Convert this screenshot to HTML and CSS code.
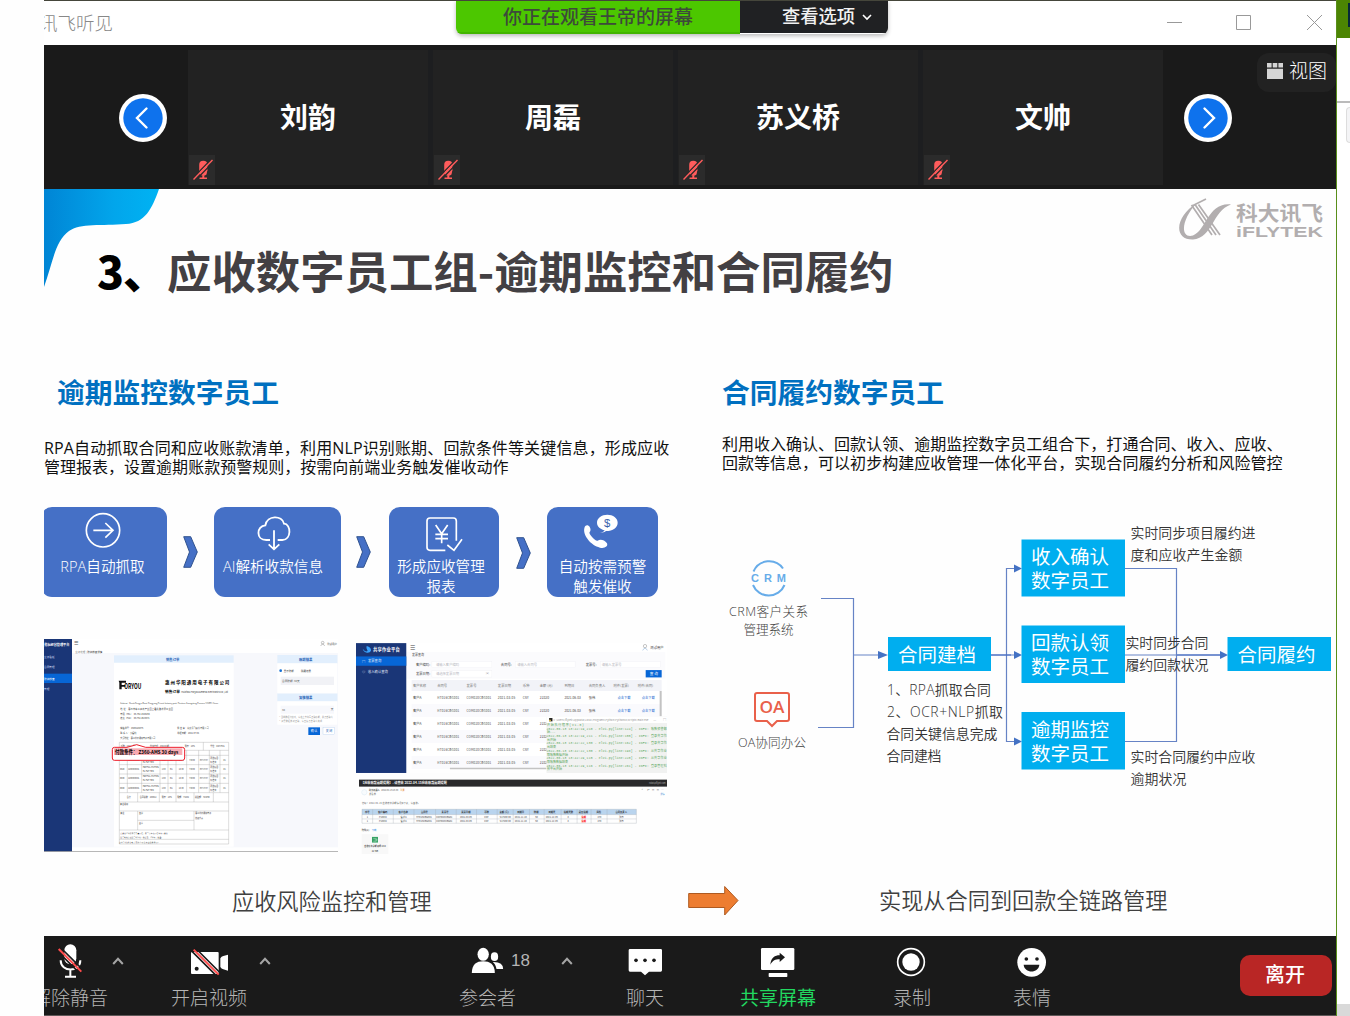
FILE: index.html
```html
<!DOCTYPE html>
<html lang="zh-CN">
<head>
<meta charset="utf-8">
<title>讯飞听见</title>
<link rel="stylesheet" href="styles.css">
</head>
<body>
<svg width="0" height="0" class="defs">
  <symbol id="muted" viewBox="0 0 26 30">
    <rect x="10.2" y="5.800" width="8.200" height="12.500" rx="4" fill="#ff5c5c"/>
    <path d="M10.200 15h8.200l-.9 4.500q-3.200 2.500-6.400 0zM13.300 19h2v3.500h2.700v1.600h-7.500v-1.600h2.800z" fill="#ff5c5c"/>
    <path d="M5.800 26L24.800 6.500M3.500 23.500L22.500 4" stroke="#2b2b2b" stroke-width="1.200"/>
    <path d="M4.500 24.500L23.500 5" stroke="#ff5c5c" stroke-width="1.400"/>
  </symbol>
  <symbol id="chevron" viewBox="0 0 15 32">
    <path d="M.7.7h7L14.300 16 7.700 31.300h-7L6.500 16z" fill="#4570c6" stroke="#31538f" stroke-width="1"/>
  </symbol>
  <symbol id="caret" viewBox="0 0 20 12">
    <path d="M5.200 9L10 3.800 14.800 9" fill="none" stroke="#a5a5a5" stroke-width="2"/>
  </symbol>
</svg>
<div class="desktop">
  <main class="window">
    <header class="titlebar">
      <span class="app-name">讯飞听见</span>
      <svg class="controls" width="162" height="20" viewBox="0 0 162 20" fill="none" stroke="#999">
        <path d="M3 10.500h15M72.500 3.500h14v14h-14zM143 3l15 15M158 3l-15 15"/>
      </svg>
      <div class="banner">
        <div class="watching">你正在观看王帝的屏幕</div>
        <div class="options">查看选项<svg width="12" height="8" viewBox="0 0 12 8"><path d="M2 2l4 4 4-4" fill="none" stroke="#fff" stroke-width="1.600"/></svg></div>
      </div>
    </header>

    <section class="gallery">
      <svg class="nav prev" width="48" height="48" viewBox="0 0 48 48"><circle cx="24" cy="24" r="24" fill="#fff"/><circle cx="24" cy="24" r="19.700" fill="#0e72ed"/><path d="M27.500 14.500L18 24l9.500 9.500" fill="none" stroke="#fff" stroke-width="2.400" stroke-linecap="round"/></svg>
      <div class="tiles">
        <div class="tile"><span>刘韵</span><svg class="mute"><use href="#muted"/></svg></div>
        <div class="tile"><span>周磊</span><svg class="mute"><use href="#muted"/></svg></div>
        <div class="tile"><span>苏义桥</span><svg class="mute"><use href="#muted"/></svg></div>
        <div class="tile"><span>文帅</span><svg class="mute"><use href="#muted"/></svg></div>
      </div>
      <svg class="nav next" width="48" height="48" viewBox="0 0 48 48"><circle cx="24" cy="24" r="24" fill="#fff"/><circle cx="24" cy="24" r="19.700" fill="#0e72ed"/><path d="M20.500 14.500L30 24l-9.500 9.500" fill="none" stroke="#fff" stroke-width="2.400" stroke-linecap="round"/></svg>
      <div class="view"><svg width="16" height="16" viewBox="0 0 16 16" fill="#d5d5d5"><path d="M0 0h4.600v4.600H0zM5.700 0h4.600v4.600H5.700zM11.400 0H16v4.600h-4.600zM0 5.800h16V16H0z"/></svg><span>视图</span></div>
    </section>

    <section class="slide">
      <svg class="corner" width="116" height="99" viewBox="0 0 116 99">
        <defs><linearGradient id="sky"><stop offset="0" stop-color="#0085d5"/><stop offset=".6" stop-color="#02a5eb"/><stop offset="1" stop-color="#00b3f3"/></linearGradient></defs>
        <path d="M0 0h115C108 20 101 34 82 35 58 37 36 34 25 42 11 52 9 73 0 98z" fill="url(#sky)"/>
      </svg>
      <svg class="logo" width="146" height="44" viewBox="1179 198 146 44" fill="#b2aeaf">
        <path d="M1197 203C1175 216 1173 240 1193 239.500 1213 238 1212 211 1231 204.500 1208 202 1206 231 1193 235.500 1179 239 1182 218 1197 203z"/>
        <path d="M1191.500 205l20.500 30M1195 204.500l21 30.500M1198.500 204.500l21.500 30.500M1192 206l14-7" fill="none" stroke="#b2aeaf" stroke-width="1.700"/>
        <text x="1236" y="221" font-size="20.500" font-weight="700" textLength="87" lengthAdjust="spacingAndGlyphs">科大讯飞</text>
        <text x="1236" y="236.500" font-size="15" class="latin" textLength="87" lengthAdjust="spacingAndGlyphs">iFLYTEK</text>
      </svg>
      <h1><b>3、</b>应收数字员工组-逾期监控和合同履约</h1>
      <div class="columns">
        <div class="overdue">
          <h2>逾期监控数字员工</h2>
          <p><span class="first">RPA自动抓取合同和应收账款清单，利用NLP识别账期、回款条件等关键信息，形成应收</span><br>管理报表，设置逾期账款预警规则，按需向前端业务触发催收动作</p>
          <div class="steps">
            <div class="step s1"><svg width="50" height="50" viewBox="144 441 150 150" fill="none" stroke="#fff" stroke-width="5"><circle cx="219" cy="511" r="50"/><path d="M190 511h58M226 489l23 22-23 22"/></svg>RPA自动抓取</div>
            <svg class="chev c1"><use href="#chevron"/></svg>
            <div class="step s2"><svg width="50" height="50" viewBox="654 441 150 150" fill="none" stroke="#fff" stroke-width="5.500"><path d="M720 540h-11c-32 0-30-42-3-44 5-31 51-31 56-5 22 1 23 49-5 49h-14M732 511v56M716 553l16 15 16-15"/></svg>AI解析收款信息</div>
            <svg class="chev c2"><use href="#chevron"/></svg>
            <div class="step s3"><svg width="50" height="50" viewBox="168 441 150 150" fill="none" stroke="#fff" stroke-width="5"><path d="M256 571h-46q-9 0-9-9v-79q0-9 9-9h70q9 0 9 9v59M262 555l20 16 24-33M227 495l18 26 18-26M245 520v30M226 523h38M226 536h38"/></svg>形成应收管理<br>报表</div>
            <svg class="chev c3"><use href="#chevron"/></svg>
            <div class="step s4"><svg width="50" height="50" viewBox="654 441 150 150"><path d="M683 496c7 2 12 15 6 20-5 4 17 29 24 26 7-5 20-3 28 8 4 10-8 16-21 13-27-6-52-37-47-58 1-6 5-10 10-9z" fill="#fff"/><path d="M720 518c9-1 12-4 14-7-12-3-23-11-23-23 0-14 14-24 31-24s31 10 31 24-14 25-35 25c-4 3-9 5-18 5z" fill="#fff"/><text x="732" y="500" class="dollar">$</text></svg>自动按需预警<br>触发催收</div>
          </div>
          <div class="shots">
            <svg class="shot-order" width="294" height="213" viewBox="12 27 882 639">
              <rect x="12" y="27" width="882" height="639" fill="#fff"/>
              <rect x="96" y="52" width="798" height="600" fill="#f7f8fc"/>
              <rect x="96" y="27" width="798" height="42" fill="#fff"/>
              <rect x="12" y="27" width="84" height="639" fill="#1a3677"/><rect x="12" y="131" width="84" height="28" fill="#0766d6"/>
              <g fill="#c3d2f0" font-size="9"><text x="13" y="49" font-weight="bold" font-size="9.500" fill="#fff" textLength="75">指标经营管理平台</text><text x="12" y="83" font-size="8">业务看板</text><text x="12" y="115" font-size="8">合同管理</text><text x="12" y="149" font-size="8" fill="#fff">账款核查</text><text x="12" y="181" font-size="8">管理</text></g>
              <g fill="#555" font-size="7.500"><text x="102" y="46" font-size="14">☰</text><text x="106" y="68" fill="#777">业务处理 | <tspan fill="#333">账款核查详情</tspan></text><text x="861" y="44">测试用户</text></g>
              <circle cx="848" cy="38" r="4" fill="none" stroke="#555"/><path d="M842 48q6-12 12 0" fill="none" stroke="#555"/>
              <rect x="222" y="98" width="359" height="552" fill="#fff"/>
              <g fill="#e2effd"><rect x="222" y="76" width="359" height="22"/><rect x="712" y="75" width="180" height="25"/><rect x="712" y="190" width="180" height="24"/></g>
              <g fill="#2261b5" font-size="10" font-weight="bold"><text x="378" y="92">销售订单</text><text x="777" y="92">账期结果</text><text x="777" y="206">复核结果</text></g>
              <rect x="712" y="100" width="180" height="90" fill="#fff"/><rect x="712" y="214" width="180" height="70" fill="#fff"/>
              <circle cx="722" cy="122" r="4" fill="#1670d5"/>
              <g font-size="7.500" fill="#444"><text x="731" y="125">显示账期</text><text x="783" y="125">隐藏结果</text></g>
              <rect x="722" y="140" width="160" height="25" fill="#f1f2f6"/><rect x="722" y="227" width="160" height="24" fill="#f7f8fc"/>
              <g font-size="8" fill="#555"><text x="726" y="155">合同账期: 30天</text><text x="726" y="242">30</text><text x="872" y="241">天</text></g>
              <g font-size="6" fill="#888"><text x="718" y="265" textLength="160">* 当前数据待修改，请在上方填写正确账期，并点击确认</text><text x="718" y="277" textLength="128">* 如果数据核对正确，请直接点击确认完成</text></g>
              <rect x="805" y="292" width="35" height="23" fill="#0766d6"/><rect x="849" y="292" width="35" height="22" fill="#fff" stroke="#a8c7ee"/>
              <g font-size="9"><text x="812" y="307" fill="#fff">确 认</text><text x="857" y="307" fill="#2261b5">关 闭</text></g>
              <path d="M236 152h22v6h-13v7h11v5h-11v8h-7v-20z" fill="#111"/>
              <text x="253" y="177" font-size="22" font-weight="bold" textLength="51" lengthAdjust="spacingAndGlyphs">ORYOU</text>
              <text x="375" y="161" font-size="13.500" font-weight="bold" textLength="193">惠州华阳通用电子有限公司</text>
              <text x="375" y="190" font-size="11" font-weight="bold" textLength="45">销售订单</text><text x="424" y="189" font-size="7" fill="#333" textLength="140">Huizhou Foryou General Electronics Co.,Ltd</text>
              <g font-size="6.500" fill="#333"><text x="241" y="223" font-size="5.500" textLength="293">Address：North Dongjia Road, Dongjiang Hi-tech Industry park, Huizhou, Guangdong Province 516005, China</text><text x="241" y="239" textLength="158">地 址：惠州市东江高新产业园上霞北路华阳工业园</text><text x="241" y="254">电话（TEL）: 86-752-2619298</text><text x="241" y="268">传真（FAX）: 86-752-2619871</text><text x="241" y="298">销售单号：4500128075</text><text x="241" y="313">联 系 人：小福利</text><text x="241" y="327" font-size="6" textLength="105">交货地址：惠州华阳通用电子有限公司</text><text x="412" y="298" font-size="6" textLength="94">供 应 商：科大讯飞股份有限公司</text><text x="412" y="313">单据日期：2021.07.04</text></g>
              <g fill="none" stroke="#999" stroke-width="1"><path d="M238 337h328v305H238zM238 361h328M238 376h328M238 404h328M238 432h328M238 460h328M238 488h328M238 516h328M238 543h328M238 600h328M238 628h328M293 543v57M462 543v57M293 571h169M490 337v24M262 361v127M305 361v127M360 361v127M384 361v127M408 361v127M440 361v127M476 361v127M508 361v127M540 361v127M293 488v28M358 488v28M408 488v28M462 488v28M520 488v28"/></g>
              <g font-size="6" fill="#333"><text x="242" y="351">币种：CNY 人民币</text><text x="330" y="351">付款方式：Z360 账期</text><text x="434" y="351">税率：13%</text><text x="511" y="351">单位：CNY/PCS</text>
                <text x="240" y="420">0020</text><text x="240" y="448">0030</text><text x="240" y="476">0040</text>
                <g id="order-row"><text x="264" y="420">1200000045</text><text x="308" y="414">HWYFUL-PLMTRS</text><text x="308" y="426">HL-FGF-TRK</text><text x="365" y="420">1.00</text><text x="390" y="420">EA</text><text x="416" y="420">13.00</text><text x="448" y="420">73880</text><text x="479" y="420" font-size="5">2021.03.07</text><text x="511" y="414">研发项目</text><text x="511" y="426">标准款</text><text x="550" y="420">45</text></g>
                <use href="#order-row" y="28"/><use href="#order-row" y="56"/><use href="#order-row" y="-28"/>
                <text x="260" y="504">合计</text><text x="299" y="504">合同总数：100012</text><text x="365" y="504">税率：13%</text><text x="412" y="504">税额：75482</text><text x="465" y="504">总金额：726098</text>
                <text x="240" y="526">备注说明</text><text x="241" y="553">备注</text><text x="297" y="553">签字</text><text x="297" y="582">盖章</text><text x="466" y="553">惠州华阳通用电子</text><text x="466" y="567">授权代表</text>
                <text x="241" y="611" font-size="5" textLength="142">请确认订单后签字盖章回传，若三日内未回传视为已确认</text><text x="241" y="624" font-size="5" textLength="128">送货地址请在送货单注明：供应商，订单号，数量。</text><text x="237" y="639" font-size="5" textLength="122">惠州华阳通用电子有限公司保留最终解释权。</text></g>
              <path d="M223 352h38l29-8 27 8h110q7 0 7 7v25q0 7-7 7H223q-6 0-6-7v-25q0-7 6-7z" fill="#fff" stroke="#ed1c29" stroke-width="3"/>
              <rect x="222" y="355" width="205" height="20" fill="#f8abb2"/><text x="225" y="371" font-size="16" font-weight="bold" textLength="190" lengthAdjust="spacingAndGlyphs">付款条件： Z360-AMS 30 days</text>
              <path d="M12 665h882" stroke="#aaa" stroke-width="3"/>
            </svg>
            <svg class="shot-platform" width="311" height="212" viewBox="18 39 934 636">
              <rect x="18" y="39" width="934" height="390" fill="#fff"/><rect x="169" y="66" width="778" height="80" fill="#fbfbfd"/>
              <rect x="18" y="39" width="151" height="390" fill="#1a3677"/><rect x="18" y="79" width="151" height="28" fill="#0766d6"/>
              <path d="M38 56q8 11 15 7-6-9-3-15 14 3 13 14-3 7-12 6-10-2-13-12z" fill="#39a4ff"/>
              <text x="69" y="63" font-size="13" font-weight="bold" fill="#fff" textLength="81">共享作业平台</text>
              <g fill="#e4ecfb" font-size="10"><text x="36" y="98">▤</text><text x="54" y="97">发票查询</text><text x="36" y="130">◎</text><text x="54" y="130">收入确认查询</text></g>
              <g font-size="10" fill="#444"><text x="179" y="59" font-size="17">☰</text><text x="186" y="78" font-size="9">发票查询</text><text x="902" y="56">测试用户</text><text x="198" y="107">客户编码:</text><text x="198" y="135">发票日期:</text><text x="453" y="107">合同号:</text><text x="708" y="107">发票号:</text></g>
              <circle cx="886" cy="48" r="5" fill="none" stroke="#555"/><path d="M879 61q7-14 14 0" stroke="#3776bd" fill="none"/>
              <g fill="#fff" stroke="#ededf3"><rect x="246" y="94" width="180" height="19"/><rect x="246" y="122" width="180" height="19"/><rect x="496" y="94" width="180" height="19"/><rect x="752" y="94" width="180" height="19"/></g>
              <g font-size="10" fill="#b7b7c0"><text x="258" y="107">请输入客户编码</text><text x="258" y="135">请选择发票日期</text><text x="408" y="136">▣</text><text x="502" y="107">请输入合同号</text><text x="756" y="107">请输入发票号</text></g>
              <rect x="888" y="120" width="48" height="22" fill="#0766d6"/><text x="900" y="135" fill="#fff" font-size="11">查 询</text>
              <rect x="185" y="150" width="751" height="33" fill="#f2f3f8"/>
              <g font-size="10" fill="#777"><text x="189" y="170">客户名称</text><text x="262" y="170">合同号</text><text x="350" y="170">发票号</text><text x="444" y="170">发票日期</text><text x="519" y="170">币种</text><text x="570" y="170">金额 (元)</text><text x="644" y="170">到期日</text><text x="717" y="170">合同负责人</text><text x="791" y="170">附件(发票)</text><text x="864" y="170">附件(合同)</text></g>
              <path d="M185 222h751v39H185zM185 300h405v39H185zM185 378h405v39H185z" fill="#fafafd"/>
              <g id="bill" font-size="10" fill="#444"><text x="189" y="206">客户A</text><text x="262" y="206" font-size="9" textLength="66">HT016CBG001</text><text x="350" y="206" font-size="9" textLength="74">COM020CBG001</text><text x="444" y="206" font-size="9.500" textLength="52">2021-03-05</text><text x="519" y="206" font-size="9">CNY</text><text x="570" y="206">22320</text></g>
              <use href="#bill" y="39"/><use href="#bill" y="78"/><use href="#bill" y="118"/><use href="#bill" y="157"/><use href="#bill" y="196"/>
              <g id="bill-end" font-size="10"><text x="644" y="206" font-size="9.500" fill="#444">2021-06-03</text><text x="717" y="206" fill="#444">张伟</text><text x="803" y="206" fill="#1768d0">点击下载</text><text x="876" y="206" fill="#1768d0">点击下载</text></g><use href="#bill-end" y="39"/>
              <path d="M930 183h6v78h-6zM300 413h290v5H300z" fill="#c3c3c3"/>
              <rect x="590" y="259" width="362" height="170" fill="#f1f2f1"/><rect x="590" y="259" width="362" height="20" fill="#fff"/><path d="M598 264h10v10h-10z" fill="#222"/><path d="M598 274v-5h5v5z" fill="#efc943"/>
              <text x="611" y="272" font-size="7" fill="#888" textLength="285">C:\Users\iflytek\AppData\Local\Programs\Python\Python38\scripts\main.exe</text><text x="911" y="273" font-size="10" fill="#999" textLength="39">— □</text>
              <g class="console" font-size="9"><text x="592" y="288" textLength="110">开始执行程序(v1.0)</text><text x="590" y="300" textLength="361">2022-06-13 13:42:19,210 - elvi.py[line:124] - INFO: 账款预警邮</text><text x="592" y="310">始...</text><text x="590" y="321" textLength="361">2022-06-13 13:42:19,211 - elvi.py[line:155] - INFO: 登录共享作</text><text x="592" y="332">台开始</text><text x="590" y="343" textLength="361">2022-06-13 13:42:22,130 - elvi.py[line:162] - INFO: 登录共享作</text><text x="592" y="354">台结束</text><text x="590" y="366" textLength="361">2022-06-13 13:42:22,130 - elvi.py[line:198] - INFO: 从共享作业</text><text x="592" y="377">取账款数据开始</text><text x="590" y="388" textLength="361">2022-06-13 13:42:29,115 - elvi.py[line:220] - INFO: 从共享作业</text><text x="592" y="399">取账款数据结束</text><text x="590" y="411" textLength="361">2022-06-13 13:42:29,116 - elvi.py[line:261] - INFO: 登录管理科</text><text x="592" y="421">技平台开始</text></g>
              <rect x="27" y="449" width="925" height="21" fill="#29292b"/><text x="33" y="461" font-size="9.500" font-weight="bold" fill="#fff" textLength="258">【应收账款逾期提醒】- 请查收 2022-04-15应收账款逾期提醒</text><text x="898" y="461" font-size="6" fill="#aaa" textLength="50">robot@iflytek.com</text>
              <circle cx="43" cy="487" r="8" fill="#f8fbfd" stroke="#cce2ef"/><g font-size="6.500" fill="#555"><text x="57" y="483" font-weight="bold">财务机器人</text><text x="94" y="483">2022-04-15 16:30</text><text x="151" y="483" fill="#e68c35">重要</text><text x="57" y="495">发给  我</text><text x="875" y="484" font-size="8" textLength="68">⌃ ↶ ⊙ ⊙ ⋯</text><text x="932" y="495" fill="#398bd4">详情</text><text x="36" y="521" textLength="174">您好！2022-04-15 应收账款逾期情况如下表，请查收。</text></g>
              <rect x="36" y="538" width="824" height="16" fill="#b9d4ee"/><path d="M36 538h824M36 554h824M36 567h824M36 580h824M36 538v42M68 538v42M130 538v42M192 538v42M257 538v42M319 538v42M380 538v42M442 538v42M490 538v42M539 538v42M583 538v42M634 538v42M682 538v42M724 538v42M772 538v42M860 538v42" fill="none" stroke="#a5abb2"/>
              <g font-size="7" font-weight="bold" fill="#333"><text x="45" y="549">序号</text><text x="84" y="549">客户编码</text><text x="146" y="549">客户名称</text><text x="213" y="549">合同号</text><text x="275" y="549">发票号</text><text x="334" y="549">发票日期</text><text x="403" y="549">币种</text><text x="449" y="549">金额 (元)</text><text x="502" y="549">到期日</text><text x="552" y="549">账期</text><text x="596" y="549">到期天</text><text x="642" y="549">逾期天数</text><text x="687" y="549">是否逾期</text><text x="740" y="549">风险</text><text x="797" y="549">合同负责人</text></g>
              <g id="mail-row" font-size="7" fill="#444"><text x="50" y="563">1</text><text x="87" y="563">P10032</text><text x="152" y="563">客户A</text><text x="199" y="563">HT016CBG001</text><text x="259" y="563">COM020CBG01</text><text x="330" y="563">2021-08-05</text><text x="403" y="563">CNY</text><text x="450" y="563">917200.00</text><text x="495" y="563">2021-11-28</text><text x="556" y="563">60</text><text x="588" y="563">2021-12-05</text><text x="653" y="563">8</text><text x="695" y="563" fill="red" font-weight="bold">逾期</text><text x="743" y="563">270</text><text x="808" y="563">张伟</text></g><use href="#mail-row" y="13"/>
              <g font-size="7"><text x="35" y="604">附件(1)</text><text x="65" y="604" fill="#2285df">下载</text></g><rect x="35" y="613" width="80" height="59" fill="#f8f8f8"/><rect x="66" y="621" width="18" height="17" fill="#38a365"/><path d="M70 626h9v8h-9M74 630h9" stroke="#fff" fill="none"/><text x="43" y="651" font-size="6" textLength="64">应收账款逾期明细.xlsx</text><text x="65" y="665" font-size="6">12.7KB</text>
            </svg>
          </div>
        </div>
        <div class="contract">
          <h2>合同履约数字员工</h2>
          <p>利用收入确认、回款认领、逾期监控数字员工组合下，打通合同、收入、应收、<br>回款等信息，可以初步构建应收管理一体化平台，实现合同履约分析和风险管控</p>
          <svg class="flow" width="614" height="310" viewBox="722 500 614 310">
            <g fill="none" stroke="#6683c5" stroke-width="1.200"><path d="M821 598.500h32.500v129H818M853.500 655H880M991 655h24M1015 568.500h-8.500v173h8.500M1125 568.500h51.500v173H1125M1125 655h97"/></g>
            <path d="M991 655h20M1177 655h45" stroke="#3c65c0"/>
            <path d="M878 651l10 4-10 4zM1014 564.500l8 4-8 4zM1014 651l8 4-8 4zM1014 737.500l8 4-8 4zM1220 651l8 4-8 4z" fill="#4472c4"/>
            <g fill="#00aeef"><path d="M888 637h103v34H888zM1021.500 539.500H1125v57h-103.500zM1021.500 625.500H1125V683h-103.500zM1021.500 712H1125v57.500h-103.500zM1227.500 637H1331v34h-103.500z"/></g>
            <g class="node"><text x="898" y="662" textLength="78">合同建档</text><text x="1031" y="563.500" textLength="78">收入确认</text><text x="1031" y="587.500" textLength="78">数字员工</text><text x="1031" y="650" textLength="78">回款认领</text><text x="1031" y="674" textLength="78">数字员工</text><text x="1031" y="736.500" textLength="78">逾期监控</text><text x="1031" y="760.500" textLength="78">数字员工</text><text x="1237.500" y="662" textLength="78">合同履约</text></g>
            <g class="note"><text x="1130.500" y="537.500" textLength="125">实时同步项目履约进</text><text x="1130.500" y="559.500" textLength="112">度和应收产生金额</text><text x="1125.500" y="648" textLength="83">实时同步合同</text><text x="1125.500" y="670" textLength="83">履约回款状况</text><text x="1130.500" y="761.500" textLength="125">实时合同履约中应收</text><text x="1130.500" y="783.500" textLength="56">逾期状况</text>
            <text x="887" y="695" textLength="104">1、RPA抓取合同</text><text x="887" y="717" textLength="116">2、OCR+NLP抓取</text><text x="886.500" y="738.500" textLength="111">合同关键信息完成</text><text x="886.500" y="760.500" textLength="55">合同建档</text></g>
            <g class="source"><text x="729" y="615.500" textLength="79">CRM客户关系</text><text x="743.500" y="634" textLength="50">管理系统</text><text x="738" y="747" textLength="68">OA协同办公</text></g>
            <path d="M753.500 571.500a17 17 0 0 1 29.500-3M753 585a17 17 0 0 0 31.500 0" fill="none" stroke="#67ace9" stroke-width="2"/>
            <text x="751" y="582" class="latin" font-size="11" fill="#67ace9" textLength="35">CRM</text>
            <path d="M757 693h30q2 0 2 2v24q0 2-2 2h-10l-5 5-5-5h-10q-2 0-2-2v-24q0-2 2-2z" fill="none" stroke="#e9604a" stroke-width="2"/>
            <text x="759.500" y="712.500" class="oa" font-size="16.500" fill="#e9604a" textLength="25" lengthAdjust="spacingAndGlyphs">OA</text>
          </svg>
        </div>
      </div>
      <footer class="summary">
        <span class="risk">应收风险监控和管理</span>
        <svg width="51" height="32" viewBox="0 0 51 32"><path d="M.7 8.500h36V1.500L50 15.500 36.700 30v-7.500H.7z" fill="#ed7d31" stroke="#ae5a21"/></svg>
        <span class="chain">实现从合同到回款全链路管理</span>
      </footer>
    </section>

    <nav class="toolbar">
      <div class="tool t-audio"><svg viewBox="48 216 144 120"><rect x="103" y="226" width="36" height="60" rx="18" fill="#fff"/><path d="M92 274c0 37 59 37 59 0M121 302v20M105 323h33" fill="none" stroke="#fff" stroke-width="6"/><path d="M90 234l68 68M82 246l68 68" stroke="#1a1a1a" stroke-width="5"/><path d="M86 240l68 68" stroke="#ff4c4c" stroke-width="6"/></svg><span>解除静音</span></div>
      <svg class="caret"><use href="#caret"/></svg>
      <div class="tool t-video"><svg viewBox="465 216 144 120"><rect x="483" y="249" width="83" height="66" rx="3" fill="#fff"/><path d="M571 268q3-6 9-7l14-4v48l-14-4q-6-1-9-7z" fill="#fff"/><circle cx="500" cy="299" r="6" fill="#1a1a1a"/><path d="M496 237l75 75M486 247l75 75" stroke="#1a1a1a" stroke-width="5"/><path d="M491 242l75 75" stroke="#ff4c4c" stroke-width="6"/></svg><span>开启视频</span></div>
      <svg class="caret c-video"><use href="#caret"/></svg>
      <div class="tool t-people"><svg viewBox="40.500 216 144 120" fill="#fff"><ellipse cx="98" cy="256" rx="17" ry="19.500"/><path d="M64 312c0-26 14-35 34-35s35 9 35 35z"/><ellipse cx="132" cy="263" rx="11" ry="13"/><path d="M127 279q31-1 31 21h-20q-3-15-11-21z"/></svg><span>参会者</span></div>
      <span class="count">18</span>
      <svg class="caret c-people"><use href="#caret"/></svg>
      <div class="tool t-chat"><svg viewBox="513 216 144 120"><path d="M540 240h92q4 0 4 4v60q0 4-4 4h-35l-12 11-12-11h-33q-4 0-4-4v-60q0-4 4-4z" fill="#fff"/><g fill="#1a1a1a"><circle cx="558" cy="274" r="5.500"/><circle cx="585" cy="274" r="5.500"/><circle cx="612" cy="274" r="5.500"/></g></svg><span>聊天</span></div>
      <div class="tool t-share"><svg viewBox="912 216 144 120"><rect x="933" y="237" width="100" height="66" rx="4" fill="#fff"/><rect x="956" y="312" width="56" height="12" rx="2" fill="#fff"/><path d="M961 287c2-22 14-28 28-28v-8l16 14-16 14v-8c-14 0-20 3-28 16z" fill="#1a1a1a"/></svg><span>共享屏幕</span></div>
      <div class="tool t-record"><svg viewBox="24 216 144 120"><circle cx="93" cy="279" r="40" fill="none" stroke="#fff" stroke-width="5"/><circle cx="93" cy="279" r="26" fill="#fff"/></svg><span>录制</span></div>
      <div class="tool t-react"><svg viewBox="384 216 144 120"><circle cx="455" cy="280" r="43" fill="#fff"/><g fill="#1a1a1a"><circle cx="439" cy="270" r="5.500"/><circle cx="471" cy="270" r="5.500"/><path d="M431 287h47c-2 27-45 27-47 0z"/></g></svg><span>表情</span></div>
      <button class="leave">离开</button>
    </nav>
  </main>
  <aside class="behind"><div class="peek-title"></div><div class="peek-bar"></div><div class="peek-field"></div><div class="peek-foot"></div></aside>
</div>
</body>
</html>
```
FILE: styles.css
```css
* { box-sizing: border-box; }
body { margin: 0; background: #fefefe; font-family: "Noto Sans CJK SC", sans-serif; }
svg { flex: none; display: block; }
.defs { position: absolute; }
.desktop { width: 1350px; height: 1016px; padding-left: 44px; display: flex; overflow: hidden; }
.window { width: 1292px; flex: none; display: flex; flex-direction: column; overflow: hidden; border-top: 1px solid #45463b; border-bottom: 1px solid #5f5858; }

.titlebar { height: 44px; flex: none; background: #fff; display: flex; align-items: center; justify-content: space-between; position: relative; }
.app-name { margin-left: -5px; font-size: 18.5px; font-weight: 300; color: #888; line-height: 42px; height: 44px; white-space: nowrap; }
.controls { margin: 0 10px 2px 0; }
.banner { position: absolute; left: 412px; top: -1px; width: 432px; height: 34px; display: flex; border-radius: 0 0 6px 6px; overflow: hidden; box-shadow: 0 2px 4px #0004; line-height: 31px; font-weight: 500; white-space: nowrap; }
.watching { width: 284px; background: #4cc700; border-bottom: 2px solid #43b500; color: #3d4a3a; text-align: center; font-size: 19px; }
.options { flex: 1; background: #202123; color: #f1f1f1; font-size: 18.3px; display: flex; align-items: center; padding: 0 0 2px 42px; gap: 6px; height: 33px; }
.options svg { margin-top: 2px; }

.gallery { height: 144px; flex: none; background: #1a1a1a; display: flex; align-items: flex-start; padding-left: 75px; }
.nav { margin-top: 49px; }
.tiles { display: flex; gap: 5px; margin: 5px 21px 0; background: #1d1e20; }
.tile { width: 240px; height: 135px; background: #222; position: relative; display: flex; align-items: center; justify-content: center; color: #fff; font-size: 28px; font-weight: 700; }
.tile span { margin-bottom: 3px; }
.mute { position: absolute; left: 1px; bottom: 0; width: 26px; height: 30px; background: #2b2b2b; }
.view { margin: 8px 0 0 25px; width: 79px; height: 39px; border-radius: 12px; background: #222; display: flex; align-items: center; gap: 7px; padding: 0 0 3px 10px; color: #fff; font-size: 19px; font-weight: 300; white-space: nowrap; }
.view span { margin: -4px 0 0 -1px; }

.slide { height: 747px; flex: none; background: #fefefe; position: relative; padding-top: 51px; display: flex; flex-direction: column; }
.corner { position: absolute; left: 0; top: 0; }
.logo { position: absolute; right: 11px; top: 9px; }
.latin { font-family: "Liberation Sans", sans-serif; font-weight: 700; }
h1 { position: relative; margin: 0 0 0 53px; font-size: 44.4px; line-height: 60px; font-weight: 700; color: #434043; white-space: nowrap; display: flex; }
h1 b { width: 70px; color: #000; font-size: 44.4px; letter-spacing: -1px; }
.columns { display: flex; height: 585px; flex: none; padding-top: 71px; }
.overdue { width: 678px; flex: none; }
.contract { width: 614px; flex: none; }
h2 { margin: 0; font-size: 27.75px; line-height: 40px; color: #0070c0; white-space: nowrap; }
.overdue h2 { margin-left: 13px; }
p { margin: 24px 0 0; font-size: 16.03px; line-height: 19px; color: #111; white-space: nowrap; font-family: "Open Sans", "Noto Sans CJK SC", sans-serif; }
.overdue p { margin-top: 28px; }
.first { letter-spacing: .125px; }
.steps { display: flex; margin: 30px 0 0 -3px; height: 90px; }
.step { background: #4570c6; border-radius: 11px; color: #fff; font: 350 14.6px/20px "Open Sans", "Noto Sans CJK SC", sans-serif; text-align: center; white-space: nowrap; }
.step svg { margin: 0 auto -1px; }
.s1 { width: 126px; padding-right: 3px; }
.s2 { width: 127px; padding-right: 9px; }
.s3 { width: 110px; padding-right: 6px; }
.s4 { width: 111px; }
.dollar { font: 400 34px "Liberation Sans", sans-serif; fill: #3a5fac; }
.chev { width: 15px; height: 32px; margin-top: 29px; }
.c1 { margin-left: 16px; margin-right: 16px; }
.c2 { margin-left: 15px; margin-right: 18px; }
.c3 { margin-left: 17px; margin-right: 16px; margin-top: 30px; }
.shots { display: flex; gap: 18px; margin-top: 42px; align-items: flex-start; }
.shot-platform { margin-top: 4px; }
.console { fill: #58a55a; font-family: "Liberation Mono", "Noto Sans CJK SC", monospace; }
.flow { margin-top: 27px; }
.node { font-size: 19.5px; fill: #fff; }
.note { font-family: "Open Sans", "Noto Sans CJK SC", sans-serif; font-size: 13.9px; font-weight: 350; fill: #333; }
.source { font-family: "Open Sans", "Noto Sans CJK SC", sans-serif; font-size: 12.6px; font-weight: 300; fill: #444; }
.oa { font-family: "Open Sans", sans-serif; font-weight: 600; }
.summary { display: flex; height: 32px; line-height: 30px; font-size: 22.2px; color: #404040; padding-left: 188px; white-space: nowrap; font-weight: 350; }
.risk { width: 456px; }
.chain { margin-left: 140px; margin-top: -1px; }

.toolbar { height: 79px; flex: none; background: #1a1a1a; display: flex; align-items: flex-start; color: #b5b5b5; }
.tool { flex: none; padding-top: 5px; display: flex; flex-direction: column; align-items: center; font-size: 19px; font-weight: 300; line-height: 31px; white-space: nowrap; }
.tool svg { width: 48px; height: 40px; }
.tool span { height: 31px; }
.t-audio { width: 76px; margin-left: -12px; }
.t-video { width: 76px; margin-left: 43px; }
.t-people { width: 57px; margin-left: 184px; }
.t-chat { width: 38px; margin-left: 49px; }
.t-share { width: 76px; margin-left: 76px; color: #22d860; font-weight: 400; }
.t-record { width: 38px; margin-left: 77px; }
.t-react { width: 38px; margin-left: 82px; }
.caret { width: 20px; height: 12px; margin-top: 19px; }
.c-video { margin-left: 8px; }
.c-people { margin-left: 24px; }
.count { margin: 13px 0 0 -5px; width: 22px; font: 17px/24px "Liberation Sans", sans-serif; }
.leave { margin: 19px 0 0 189px; width: 92px; height: 41px; border: 0; border-radius: 10px; background: #b92625; color: #fff; font: 500 20px/38px "Noto Sans CJK SC", sans-serif; padding: 0 2px 3px 0; flex: none; }

.behind { width: 14px; flex: none; border-left: 1px solid #5a8f1b; display: flex; flex-direction: column; background: #fff; }
.peek-title { height: 38px; background: linear-gradient(#06283a, #06283a) 11px 3px / 3px 24px no-repeat #4c8503; }
.peek-bar { height: 65px; border-bottom: 2px solid #bbb; }
.peek-field { height: 36px; margin: 4px 0 0 9px; border: 1px solid #ddd; border-right: 0; border-radius: 6px 0 0 6px; background: #f4f4f6; }
.peek-foot { margin-top: auto; height: 12px; background: #d9d9d9; }
```
